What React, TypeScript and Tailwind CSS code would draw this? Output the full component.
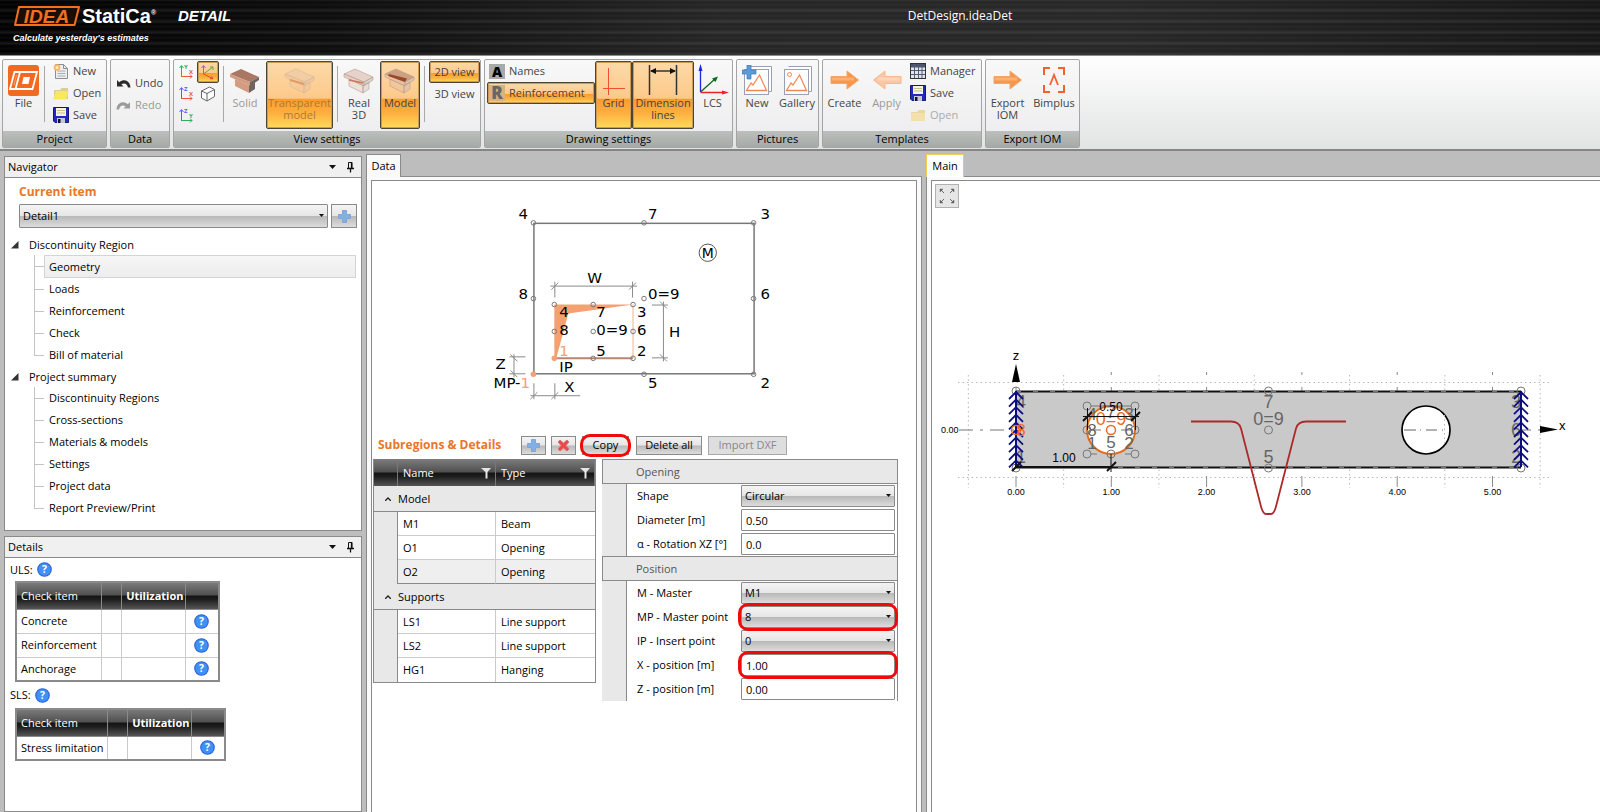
import type { ReactNode } from "react";

const uiFont = "font-['Open_Sans','Noto_Sans',sans-serif]";
const activeBtn =
  "rounded-[2px] border border-[#4a4538] shadow-[inset_0_0_0_1px_#c99b55] bg-[linear-gradient(#fcd9a8_0%,#fdc98a_55%,#fb9c2c_56%,#fdb040_78%,#ffdc5c_100%)]";
const greyBtn =
  "border border-[#8a8a8a] bg-[linear-gradient(#f4f4f4_0%,#e6e6e6_48%,#b9b9b9_52%,#dcdcdc_100%)]";
const headGrad = "bg-[linear-gradient(#7d7d7d_0%,#505050_48%,#141414_52%,#1e1e1e_65%,#555_100%)]";

/* ---------- icons ---------- */

function FileLogo() {
  return (
    <svg width="31" height="31" viewBox="0 0 31 31" aria-hidden="true">
      <rect width="31" height="31" rx="3" fill="#f26a21" />
      <g fill="none" stroke="#fff" strokeWidth="1.800">
        <path d="M6.500 7h22.500l-4.500 17H2z" />
        <path d="M12 7 7.500 24" />
        <path d="M8.500 10 6 20" strokeWidth="1" strokeOpacity=".35" />
      </g>
      <path d="M15.500 12h6.500l-1.500 7H14z" fill="#fff" />
    </svg>
  );
}

function NewDocIcon() {
  return (
    <svg width="16" height="16" viewBox="0 0 16 16" aria-hidden="true">
      <path d="M2.500 1.500h8l4 4v10h-12z" fill="#eceef0" stroke="#8b8f94" />
      <path d="M10.500 1.500v4h4" fill="none" stroke="#8b8f94" />
      <path d="M4.500 8h8M4.500 10.500h8M4.500 13h8" stroke="#a9adb2" />
      <circle cx="4" cy="4.500" r="3.300" fill="#f9b668" />
      <circle cx="4" cy="4.500" r="1.500" fill="#fff0b0" />
    </svg>
  );
}

function FolderIcon({ dim = false }: { dim?: boolean }) {
  return (
    <svg width="16" height="16" viewBox="0 0 16 16" aria-hidden="true">
      <path d="M1 5h6l1.500-2H15v11H1z" fill={dim ? "#ecd7a0" : "#d9cf93"} />
      <path d={dim ? "M1 6h14v8H1z" : "M3 6h13l-3 8.500H0z"} fill={dim ? "#f3e0ae" : "#f7e85c"} />
    </svg>
  );
}

function SaveIcon() {
  return (
    <svg width="16" height="16" viewBox="0 0 16 16" aria-hidden="true">
      <path d="M.5.500h15v15H2L.5 14z" fill="#2327c4" stroke="#15177a" />
      <rect x="3" y="1" width="10" height="8" fill="#f4f4e4" />
      <path d="M4 3.500h8M4 6h8" stroke="#c9c18c" />
      <rect x="4" y="11" width="8" height="5" fill="#c4c6dc" />
      <rect x="5" y="12" width="2.500" height="4" fill="#101040" />
    </svg>
  );
}

function UndoIcon({ redo = false }: { redo?: boolean }) {
  return (
    <svg width="15" height="12" viewBox="0 0 15 12" aria-hidden="true">
      <path
        d={
          redo
            ? "M14 9.500H7.500l2.200-2.200C6.500 5.500 4 6.500 3 10.500H.5C1 4.500 6 1 11.800 5.200L14 3z"
            : "M1 9.500h6.500L5.300 7.300C8.500 5.500 11 6.500 12 10.500h2.500C14 4.500 9 1 3.200 5.200L1 3z"
        }
        fill={redo ? "#9b9b9b" : "#2b2b2b"}
      />
    </svg>
  );
}

function AxisIcon({ up, upColor, side, sideColor }: { up: string; upColor: string; side: string; sideColor: string }) {
  return (
    <svg width="16" height="17" viewBox="0 0 16 17" aria-hidden="true">
      <path d="M3.500 14V3M1.500 5l2-2.500 2 2.500" fill="none" stroke={upColor} />
      <path d="M3.500 13.500H14M12 11.500l2 2-2 2" fill="none" stroke={sideColor} />
      <text x="6" y="6" fontSize="6" fontWeight="700" fill={upColor}>
        {up}
      </text>
      <text x="11" y="11" fontSize="6" fontWeight="700" fill={sideColor}>
        {side}
      </text>
    </svg>
  );
}

function Axis3dIcon() {
  return (
    <svg width="16" height="16" viewBox="0 0 16 16" fill="none" aria-hidden="true">
      <path d="M3.500 10V1.500M1.500 4l2-2.500 2 2.500" stroke="#a06ab8" />
      <path d="M3.500 10 13 3M10 3h3v3" stroke="#6fa545" />
      <path d="M3.500 10l9 4.500M10 14.700l3 0-1.500-2.500" stroke="#f0442e" />
    </svg>
  );
}

function CubeIcon() {
  return (
    <svg width="16" height="16" viewBox="0 0 16 16" fill="none" stroke="#666" aria-hidden="true">
      <path d="M1.500 5 9.500 1l5 2.500v7l-7.500 4.500-5.500-3z" fill="#fff" />
      <path d="M1.500 5 7 7.500l7.500-4M7 7.500V15" />
    </svg>
  );
}

type BeamKind = "solid" | "ghost" | "real" | "model";

function BeamIcon({ kind }: { kind: BeamKind }) {
  const solid = kind === "solid";
  const top = solid ? "#a97762" : kind === "model" ? "#b98a76" : "#dfc3b7";
  const front = solid ? "#d39b80" : "#e3b7a3";
  const side = solid ? "#70645f" : "#c9bab4";
  return (
    <svg width="32" height="27" viewBox="0 0 32 27" aria-hidden="true" opacity={kind === "ghost" ? 0.5 : 1}>
      <g stroke={solid ? "none" : "#b79d92"} strokeWidth=".6">
        <path d="M1 7 12 2l18 8-9 5z" fill={top} fillOpacity={solid ? 1 : 0.7} />
        <path d="M1 7l20 8v4L1 10z" fill={front} fillOpacity={solid ? 1 : 0.6} />
        <path d="M21 15l9-5v3l-9 6z" fill={side} fillOpacity={solid ? 1 : 0.6} />
        <path d="M6 12l14 6.500V26L6 19z" fill={front} fillOpacity={solid ? 1 : 0.35} />
        <path d="M20 18.500l6-3.500v7l-6 4z" fill={side} fillOpacity={solid ? 1 : 0.4} />
      </g>
      {kind === "real" && <path d="M6 13l14 3" stroke="#cf7555" strokeWidth="1.500" />}
      {kind === "ghost" && <path d="M6 13l14 4" stroke="#c46a30" strokeWidth="2" />}
      {kind === "model" && <path d="M5 7l18 4.500-2 3.500L4 9z" fill="#9a4a2c" />}
    </svg>
  );
}

function GridIcon() {
  return (
    <svg width="22" height="32" viewBox="0 0 22 32" stroke="#f0502e" aria-hidden="true">
      <path d="M5.500 4v27M0 24.500h22" />
    </svg>
  );
}

function DimensionIcon() {
  return (
    <svg width="30" height="32" viewBox="0 0 30 32" aria-hidden="true">
      <path d="M1.500 1v30M28.500 1v30M3 7h24" stroke="#333" strokeWidth="1.500" />
      <path d="M2 7l6-3v6zM28 7l-6-3v6z" fill="#111" />
    </svg>
  );
}

function LcsIcon() {
  return (
    <svg width="32" height="32" viewBox="0 0 32 32" aria-hidden="true">
      <path d="M3.500 28V4" stroke="#22e" strokeWidth="1.300" />
      <path d="M3.500 0l2 7h-4z" fill="#22e" />
      <path d="M3.500 28 18 15" stroke="#0a6a1a" strokeWidth="1.300" />
      <path d="M21 12.500l-2.500 5.500-3.500-3.500z" fill="#0a6a1a" />
      <path d="M3.500 28.500H28" stroke="#e22" strokeWidth="1.300" />
      <path d="M32 28.500l-7-2v4z" fill="#e22" />
    </svg>
  );
}

function PictureIcon({ plus = false }: { plus?: boolean }) {
  return (
    <svg width="31" height="31" viewBox="0 0 31 31" aria-hidden="true">
      <path d="M6.500 1.500h23v25h-3" fill="#fff" stroke="#9aa0b4" />
      <rect x="2.500" y="4.500" width="24" height="25" fill="#fff" stroke="#9aa0b4" />
      <path d="M4.500 25.500 9 18l2 2 6.500-10 7 15.500z" fill="none" stroke="#f08a55" strokeWidth="1.300" />
      {plus ? (
        <path d="M5 0h4v5h5v4H9v5H5V9H0V5h5z" fill="#5c9bd8" stroke="#3b78b8" strokeWidth=".7" />
      ) : (
        <circle cx="7.500" cy="9.500" r="2" fill="none" stroke="#f08a55" />
      )}
    </svg>
  );
}

function ArrowIcon({ left = false }: { left?: boolean }) {
  return (
    <svg width="30" height="20" viewBox="0 0 30 20" aria-hidden="true">
      <path
        d={left ? "M29 6.500H13V1L1.500 10 13 19v-5.500h16z" : "M1 6.500h16V1l11.500 9L17 19v-5.500H1z"}
        fill={left ? "#fac7a4" : "#f9964a"}
        stroke={left ? "#f7b68c" : "#f0a66c"}
      />
      <path d={left ? "M28 9H6" : "M2 9h22"} stroke="#fff" strokeOpacity=".25" strokeWidth="3" />
    </svg>
  );
}

function ManagerIcon() {
  return (
    <svg width="16" height="16" viewBox="0 0 16 16" aria-hidden="true">
      <rect x=".5" y=".5" width="15" height="15" fill="#dfe6f2" stroke="#333" />
      <rect x="1" y="1" width="14" height="3" fill="#4a5370" />
      <path d="M4.500 1v14M8.500 1v14M12 1v14M1 7.500h14M1 11.500h14M1 4h14" stroke="#555c6e" />
    </svg>
  );
}

function BimplusIcon() {
  return (
    <svg width="24" height="28" viewBox="0 0 24 28" fill="none" stroke="#f2622c" strokeWidth="2" aria-hidden="true">
      <path d="M8 2H2v7M16 2h6v7M8 26H2v-7M16 26h6v-7" />
      <path d="M8 19l4-10 4 10" strokeWidth="1.800" />
    </svg>
  );
}

function PlusIcon() {
  return (
    <svg width="13" height="13" viewBox="0 0 13 13" aria-hidden="true">
      <path d="M4.500.5h4v4h4v4h-4v4h-4v-4h-4v-4h4z" fill="#7fb0e6" stroke="#86a4cf" />
    </svg>
  );
}

function CrossIcon() {
  return (
    <svg width="13" height="13" viewBox="0 0 13 13" aria-hidden="true">
      <path d="M1 3l2-2 3.500 3L10 1l2 2-3 3.500 3 3.500-2 2-3.500-3L3 12l-2-2 3-3.500z" fill="#ef4747" stroke="#d97676" />
    </svg>
  );
}

function HelpIcon() {
  return (
    <svg width="15" height="15" viewBox="0 0 16 16" aria-hidden="true">
      <circle cx="8" cy="8" r="7.200" fill="#3f92f5" stroke="#2c5fd8" strokeWidth="1.200" />
      <text x="8" y="12" textAnchor="middle" fontSize="11" fontWeight="700" fill="#fff">
        ?
      </text>
    </svg>
  );
}

function FilterIcon() {
  return (
    <svg width="10" height="12" viewBox="0 0 10 12" aria-hidden="true">
      <path d="M0 1h10L6.500 5v6.500h-2V5z" fill="#e6e6e6" />
    </svg>
  );
}

function PinIcon() {
  return (
    <svg width="9" height="12" viewBox="0 0 9 12" aria-hidden="true">
      <path d="M2.500 7V1.500h3.500V7" fill="none" stroke="#111" />
      <path d="M5.500 1v6M1 7.500h7M4.500 8v3.500" stroke="#111" strokeWidth="1.300" />
    </svg>
  );
}

/* ---------- ribbon ---------- */

function RibbonGroup({ title, className, children }: { title: string; className: string; children: ReactNode }) {
  return (
    <section
      className={`flex h-[89px] shrink-0 flex-col overflow-hidden rounded-[2px] border border-[#a4a4a4] bg-[linear-gradient(#f8f8f8,#ececee)] ${className}`}
    >
      <div className="flex flex-1 items-start">{children}</div>
      <h2 className="h-4 bg-[linear-gradient(#bcc0bd,#a6a9a7)] text-center text-[11px] leading-4 text-black">{title}</h2>
    </section>
  );
}

function Separator() {
  return <span className="mx-1 mt-1.5 h-14 w-px shrink-0 bg-[#a8a8a8]" />;
}

function BigButton({
  icon,
  label,
  className = "",
  active = false,
}: {
  icon: ReactNode;
  label: string;
  className?: string;
  active?: boolean;
}) {
  return (
    <button
      className={`mt-px flex h-[68px] shrink-0 flex-col items-center pt-px leading-3 ${active ? activeBtn : "border border-transparent"} ${className}`}
    >
      <span className="flex h-[34px] items-center">{icon}</span>
      <span className="whitespace-pre-line text-center">{label}</span>
    </button>
  );
}

function SmallButton({ icon, label, className = "" }: { icon: ReactNode; label: string; className?: string }) {
  return (
    <button className={`flex h-[22px] items-center gap-1 whitespace-nowrap ${className}`}>
      {icon}
      {label}
    </button>
  );
}

function Ribbon() {
  return (
    <div className="flex gap-[3px] overflow-hidden border-b-2 border-[#858585] bg-[linear-gradient(#fff,#e2e3e3)] px-0.5 pb-px pt-[3px] text-[11px] text-[#444]">
      <RibbonGroup title="Project" className="w-[105px]">
        <BigButton icon={<FileLogo />} label="File" className="w-[41px]" />
        <span className="mt-1.5 h-14 w-px bg-[#a8a8a8]" />
        <div className="ml-2">
          <SmallButton icon={<NewDocIcon />} label="New" />
          <SmallButton icon={<FolderIcon />} label="Open" />
          <SmallButton icon={<SaveIcon />} label="Save" />
        </div>
      </RibbonGroup>
      <RibbonGroup title="Data" className="w-[60px]">
        <div className="ml-[5px] mt-3">
          <SmallButton icon={<UndoIcon />} label="Undo" />
          <SmallButton icon={<UndoIcon redo />} label="Redo" className="text-[#999]" />
        </div>
      </RibbonGroup>
      <RibbonGroup title="View settings" className="w-[308px]">
        <div className="ml-1 flex flex-col">
          {[
            ["Y", "#2fae62", "X", "#f0553c"],
            ["Z", "#5c5cf0", "X", "#f0553c"],
            ["Z", "#5c5cf0", "Y", "#2fae62"],
          ].map(([up, upColor, side, sideColor]) => (
            <button key={up + side} className="flex h-[22px] items-center" aria-label={`View ${up}${side}`}>
              <AxisIcon up={up} upColor={upColor} side={side} sideColor={sideColor} />
            </button>
          ))}
        </div>
        <div className="ml-[3px] flex flex-col">
          <button className={`mt-px flex size-[22px] items-center justify-center ${activeBtn}`} aria-label="Axonometry">
            <Axis3dIcon />
          </button>
          <button className="flex size-[22px] items-center justify-center" aria-label="Perspective">
            <CubeIcon />
          </button>
        </div>
        <Separator />
        <BigButton icon={<BeamIcon kind="solid" />} label="Solid" className="w-[34px] text-[#999]" />
        <BigButton
          icon={<BeamIcon kind="ghost" />}
          label={"Transparent\nmodel"}
          className="ml-1 w-[67px] text-[#ab7a34]"
          active
        />
        <Separator />
        <BigButton icon={<BeamIcon kind="real" />} label={"Real\n3D"} className="w-[34px]" />
        <BigButton icon={<BeamIcon kind="model" />} label="Model" className="ml-1 w-10" active />
        <Separator />
        <div className="flex flex-col">
          <button className={`mt-px h-[22px] w-[51px] whitespace-nowrap ${activeBtn}`}>2D view</button>
          <button className="h-[22px] w-[51px] whitespace-nowrap">3D view</button>
        </div>
      </RibbonGroup>
      <RibbonGroup title="Drawing settings" className="w-[249px]">
        <div className="ml-0.5 flex flex-col">
          <SmallButton
            icon={<span className="w-4 bg-[#a9a9a9] text-center text-[14px] font-extrabold leading-[15px] text-black">A</span>}
            label="Names"
            className="pl-0.5"
          />
          <SmallButton
            icon={<span className="w-4 bg-[#d8b27c] text-center text-[17px] font-extrabold leading-4 text-[#666]">R</span>}
            label="Reinforcement"
            className={`w-[108px] pl-px ${activeBtn}`}
          />
        </div>
        <BigButton icon={<GridIcon />} label="Grid" className="w-[37px]" active />
        <BigButton icon={<DimensionIcon />} label={"Dimension\nlines"} className="w-[62px]" active />
        <BigButton icon={<LcsIcon />} label="LCS" className="w-[37px]" />
      </RibbonGroup>
      <RibbonGroup title="Pictures" className="w-[83px]">
        <BigButton icon={<PictureIcon plus />} label="New" className="w-10" />
        <BigButton icon={<PictureIcon />} label="Gallery" className="w-10" />
      </RibbonGroup>
      <RibbonGroup title="Templates" className="w-[160px]">
        <BigButton icon={<ArrowIcon />} label="Create" className="w-[43px]" />
        <BigButton icon={<ArrowIcon left />} label="Apply" className="w-[41px] text-[#999]" />
        <div className="ml-[3px]">
          <SmallButton icon={<ManagerIcon />} label="Manager" />
          <SmallButton icon={<SaveIcon />} label="Save" />
          <SmallButton icon={<FolderIcon dim />} label="Open" className="text-[#aaa]" />
        </div>
      </RibbonGroup>
      <RibbonGroup title="Export IOM" className="w-[95px]">
        <BigButton icon={<ArrowIcon />} label={"Export\nIOM"} className="w-[43px]" />
        <BigButton icon={<BimplusIcon />} label="Bimplus" className="w-[50px]" />
      </RibbonGroup>
    </div>
  );
}

function TitleBar() {
  return (
    <header className="relative h-14 border-b border-[#8c8c8c] bg-[#0b0b0b] bg-[repeating-linear-gradient(180deg,rgba(255,255,255,0.08)_0px,rgba(0,0,0,0)_2px,rgba(255,255,255,0.04)_5px,rgba(0,0,0,0)_7px,rgba(255,255,255,0.10)_11px),linear-gradient(90deg,#000_0%,#0b0b0b_20%,#242424_45%,#262626_70%,#151515_100%)] text-white">
      <div className="flex items-start gap-0.5 pl-3.5 pt-1.5">
        <svg width="66" height="20" viewBox="0 0 66 20" role="img" aria-label="IDEA">
          <path d="M5 1h60l-4.500 18H1z" fill="#1a0d04" stroke="#f26f1d" strokeWidth="2" strokeLinejoin="round" />
          <text
            x="32.500"
            y="16.500"
            textAnchor="middle"
            fontSize="19"
            fontWeight="700"
            fontStyle="italic"
            fontFamily="Liberation Sans, sans-serif"
            fill="#f26f1d"
          >
            IDEA
          </text>
        </svg>
        <span className="w-[78px] font-['Liberation_Sans',sans-serif] text-[20px] font-bold leading-5">
          StatiCa<sup className="-top-2 text-[7px]">®</sup>
        </span>
        <span className="pl-4 font-['Liberation_Sans',sans-serif] text-[15px] font-bold italic leading-5">DETAIL</span>
      </div>
      <p className="pl-[13px] pt-1 font-['Liberation_Sans',sans-serif] text-[9px] font-bold italic leading-4">
        Calculate yesterday's estimates
      </p>
      <h1 className="absolute left-1/5 right-0 top-2 text-center text-[12px] leading-4">DetDesign.ideaDet</h1>
    </header>
  );
}

/* ---------- left column ---------- */

function Panel({ title, className = "", children }: { title: string; className?: string; children: ReactNode }) {
  return (
    <section className={`border border-[#8a8a8a] bg-white ${className}`}>
      <div className="flex h-[21px] items-center border-b border-[#8a8a8a] bg-[#f0f0f0] pl-[3px] pr-1.5">
        <h2 className="flex-1">{title}</h2>
        <button className="mr-2.5" aria-label={`${title} menu`}>
          <svg width="7" height="4" viewBox="0 0 7 4" aria-hidden="true">
            <path d="M0 0h7L3.500 4z" fill="#111" />
          </svg>
        </button>
        <button aria-label={`Pin ${title}`}>
          <PinIcon />
        </button>
      </div>
      {children}
    </section>
  );
}

function Select({ id, value, label, className = "" }: { id: string; value: string; label?: string; className?: string }) {
  return (
    <span className={`relative block ${className}`}>
      <select
        id={id}
        aria-label={label}
        defaultValue={value}
        className={`block h-full w-full appearance-none rounded-[1px] pl-[3px] leading-4 ${greyBtn}`}
      >
        <option>{value}</option>
      </select>
      <svg className="pointer-events-none absolute right-1 top-1/2 -mt-0.5" width="5" height="3" viewBox="0 0 5 3" aria-hidden="true">
        <path d="M0 0h5L2.500 3z" fill="#111" />
      </svg>
    </span>
  );
}

const tree = [
  { title: "Discontinuity Region", items: ["Geometry", "Loads", "Reinforcement", "Check", "Bill of material"] },
  {
    title: "Project summary",
    items: ["Discontinuity Regions", "Cross-sections", "Materials & models", "Settings", "Project data", "Report Preview/Print"],
  },
];

function TreeGroup({ title, items }: { title: string; items: string[] }) {
  return (
    <li>
      <div className="flex h-[21px] items-center gap-2.5 pl-1.5">
        <svg width="8" height="8" viewBox="0 0 8 8" aria-hidden="true">
          <path d="M7.500 0v7.500H0z" fill="#333" />
        </svg>
        {title}
      </div>
      <ul className="pl-[29px] pr-[5px]">
        {items.map((item, i) => (
          <li key={item} className="flex">
            <span className="flex w-2.5 flex-col">
              <span className="flex-1 border-b border-l border-[#c4c4c4]" />
              <span className={`flex-1 ${i < items.length - 1 ? "border-l border-[#c4c4c4]" : ""}`} />
            </span>
            <a
              href="#"
              className={`flex flex-1 items-center pl-1 ${
                item === "Geometry" ? "h-[23px] border border-[#d4d4d4] bg-[linear-gradient(#f6f6f7,#ededee)]" : "ml-px h-[22px]"
              }`}
            >
              {item}
            </a>
          </li>
        ))}
      </ul>
    </li>
  );
}

function CheckTable({ rows, firstCol }: { rows: string[]; firstCol: string }) {
  const th = "h-[27px] border border-[#8a8a8a] font-normal";
  const td = "h-[24px] border border-[#cbcbcb]";
  return (
    <table className="ml-2.5 border-collapse border-2 border-[#8a8a8a]">
      <thead>
        <tr className={`text-white ${headGrad}`}>
          <th className={`${th} pl-1 text-left ${firstCol}`}>Check item</th>
          <th className={`${th} w-5`} />
          <th className={`${th} w-16 pr-px text-right`}>
            <b>Utilization</b>
          </th>
          <th className={`${th} w-[34px]`} />
        </tr>
      </thead>
      <tbody>
        {rows.map((row) => (
          <tr key={row}>
            <td className={`${td} whitespace-nowrap pl-1`}>{row}</td>
            <td className={td} />
            <td className={td} />
            <td className={td}>
              <button className="mx-auto block" aria-label={`Help for ${row}`}>
                <HelpIcon />
              </button>
            </td>
          </tr>
        ))}
      </tbody>
    </table>
  );
}

function Sidebar() {
  return (
    <aside className="flex w-[358px] shrink-0 flex-col gap-[5px] pt-[5px]">
      <Panel title="Navigator" className="h-[375px]">
        <div className="px-[14px] pr-1 pt-1.5">
          <label htmlFor="current-item" className="block text-[12px] font-bold leading-4 text-[#e8762c]">
            Current item
          </label>
          <div className="mt-1 flex gap-[3px]">
            <Select id="current-item" value="Detail1" className="h-6 flex-1" />
            <button className={`flex h-6 w-[26px] items-center justify-center ${greyBtn}`} aria-label="Add item">
              <PlusIcon />
            </button>
          </div>
        </div>
        <ul className="mt-1.5">
          {tree.map((group) => (
            <TreeGroup key={group.title} title={group.title} items={group.items} />
          ))}
        </ul>
      </Panel>
      <Panel title="Details" className="flex-1">
        <h3 className="flex h-[23px] items-center gap-1 pl-[5px]">
          ULS: <HelpIcon />
        </h3>
        <CheckTable rows={["Concrete", "Reinforcement", "Anchorage"]} firstCol="w-[85px]" />
        <h3 className="flex h-[26px] items-center gap-1 pl-[5px]">
          SLS: <HelpIcon />
        </h3>
        <CheckTable rows={["Stress limitation"]} firstCol="w-[91px]" />
      </Panel>
    </aside>
  );
}

/* ---------- data column ---------- */

const schemeNodes = [
  [533, 222], [644, 222], [754, 222], [533, 298], [644, 298], [754, 298], [644, 374], [754, 374],
  [554, 304], [593, 304], [633, 304], [554, 331], [593, 331], [633, 331], [593, 358], [633, 358],
];

const schemeLabels: [number, number, string][] = [
  [518, 218, "4"], [648, 218, "7"], [761, 218, "3"], [518, 298, "8"], [648, 298, "0=9"], [761, 298, "6"],
  [648, 388, "5"], [761, 388, "2"], [587, 282, "W"], [669, 337, "H"], [495, 369, "Z"], [564, 392, "X"],
  [559, 317, "4"], [596, 317, "7"], [637, 317, "3"], [559, 335, "8"], [596, 335, "0=9"], [637, 335, "6"],
  [596, 356, "5"], [637, 356, "2"], [559, 372, "IP"],
];

function Scheme() {
  return (
    <svg className="block w-full" viewBox="371 180 546 251" fontFamily="DejaVu Sans, sans-serif" fontSize="15">
      <path d="M554 304h79l-65 9-12 45h-2z" fill="#f4a071" />
      <path d="M554 358h79" stroke="#b58672" strokeWidth="2" />
      <path d="M633 304v54" stroke="#f4b08c" />
      <rect x="533.500" y="222.500" width="221" height="151" fill="none" stroke="#777" strokeWidth="1.500" />
      <g fill="none" stroke="#8a8a8a">
        <path d="M554.500 281v16M632.500 281v16M550 285.500h87M551 289l7-7M629 289l7-7" />
        <path d="M652 304.500h16M652 357.500h16M663.500 301v60M660 301l7 7M660 354l7 7" />
        <path d="M509 356.500h16M509 373.500h16M513.500 354v23M510 354l7 7M510 370l7 7" />
        <path d="M533.500 383v16M554.500 383v16M530 395.500h50M530 399l7-7M551 399l7-7" />
      </g>
      {schemeNodes.map(([x, y]) => (
        <circle key={`${x}-${y}`} cx={x} cy={y} r="2.300" fill="none" stroke="#777" />
      ))}
      <circle cx="533" cy="374" r="2.800" fill="#f4a071" />
      <circle cx="554" cy="358" r="2.800" fill="#f4a071" />
      {schemeLabels.map(([x, y, text]) => (
        <text key={`${x}-${y}`} x={x} y={y}>
          {text}
        </text>
      ))}
      <text x="559" y="356" fill="#f4a071">
        1
      </text>
      <text x="493" y="388">
        MP-<tspan fill="#f4a071">1</tspan>
      </text>
      <circle cx="708" cy="252" r="8.700" fill="none" stroke="#555" />
      <text x="708" y="257" textAnchor="middle" fontSize="14">
        M
      </text>
    </svg>
  );
}

const regionGroups = [
  { title: "Model", rows: [["M1", "Beam"], ["O1", "Opening"], ["O2", "Opening"]] },
  { title: "Supports", rows: [["LS1", "Line support"], ["LS2", "Line support"], ["HG1", "Hanging"]] },
];

function RegionTable() {
  const th = "h-[27px] border-r border-[#777] p-0 font-normal";
  return (
    <table className="w-[223px] shrink-0 table-fixed border-separate border-spacing-0 border-x border-b border-[#8a8a8a]">
      <colgroup>
        <col className="w-6" />
        <col className="w-[98px]" />
        <col />
      </colgroup>
      <thead>
        <tr className={`text-left text-white ${headGrad}`}>
          <th className={th} />
          {["Name", "Type"].map((name) => (
            <th key={name} className={th}>
              <div className="flex items-center justify-between pl-[5px] pr-1">
                {name}
                <FilterIcon />
              </div>
            </th>
          ))}
        </tr>
      </thead>
      {regionGroups.map((group) => (
        <tbody key={group.title}>
          <tr className="bg-[#e8e8e8]">
            <th colSpan={3} className="h-[26px] border-b border-[#8a8a8a] p-0 text-left font-normal">
              <div className="flex items-center gap-[7px] pl-[11px]">
                <svg width="6" height="4" viewBox="0 0 6 4" fill="none" aria-hidden="true">
                  <path d="M0 4l3-3 3 3" stroke="#222" strokeWidth="1.300" />
                </svg>
                {group.title}
              </div>
            </th>
          </tr>
          {group.rows.map(([name, type], i) => {
            const last = i === group.rows.length - 1;
            const line = last ? "border-b-[#8a8a8a]" : "border-b-[#cbcbcb]";
            const bg = name === "O2" ? "bg-[#efefef]" : "bg-white";
            const edge = last && group.title === "Supports" ? "border-b-0" : "border-b";
            return (
              <tr key={name}>
                <td className="h-6 border-r border-[#8a8a8a] bg-[#e8e8e8] p-0" />
                <td className={`border-r border-r-[#cbcbcb] ${edge} ${line} ${bg} p-0 pl-[5px]`}>{name}</td>
                <td className={`${edge} ${line} ${bg} p-0 pl-[5px]`}>{type}</td>
              </tr>
            );
          })}
        </tbody>
      ))}
    </table>
  );
}

type Field = { id: string; label: string; value: string; select?: boolean; marked?: boolean };

const sections: { title: string; fields: Field[] }[] = [
  {
    title: "Opening",
    fields: [
      { id: "shape", label: "Shape", value: "Circular", select: true },
      { id: "diameter", label: "Diameter [m]", value: "0.50" },
      { id: "rotation", label: "α - Rotation XZ [°]", value: "0.0" },
    ],
  },
  {
    title: "Position",
    fields: [
      { id: "master", label: "M - Master", value: "M1", select: true },
      { id: "master-point", label: "MP - Master point", value: "8", select: true, marked: true },
      { id: "insert-point", label: "IP - Insert point", value: "0", select: true },
      { id: "x-position", label: "X - position [m]", value: "1.00", marked: true },
      { id: "z-position", label: "Z - position [m]", value: "0.00" },
    ],
  },
];

function Mark() {
  return <span className="pointer-events-none absolute -inset-[3px] z-10 rounded-[10px] border-[3px] border-[#f00a0a]" />;
}

function PropertyGrid() {
  return (
    <div className="w-[296px] shrink-0 border-r border-[#8a8a8a]">
      {sections.map((section) => (
        <section key={section.title}>
          <h3 className="flex h-[25px] items-center border border-r-0 border-[#8a8a8a] bg-[#e8e8e8] pl-[33px] text-[#555]">
            {section.title}
          </h3>
          <div className="border-l-[24px] border-[#e8e8e8]">
            {section.fields.map((field) => (
              <div key={field.id} className="flex h-6 items-center border-l border-[#8a8a8a] pl-2.5 pr-0.5">
                <label htmlFor={field.id} className="flex-1 whitespace-nowrap">
                  {field.label}
                </label>
                <div className="relative h-[22px] w-[154px]">
                  {field.select ? (
                    <Select id={field.id} value={field.value} className="h-full" />
                  ) : (
                    <input
                      id={field.id}
                      defaultValue={field.value}
                      className="block h-full w-full rounded-[1px] border border-[#8a8a8a] bg-white pl-1 leading-4"
                    />
                  )}
                  {field.marked && <Mark />}
                </div>
              </div>
            ))}
          </div>
        </section>
      ))}
    </div>
  );
}

function DataColumn() {
  return (
    <section className="flex w-[556px] shrink-0 flex-col pt-[3px]">
      <div className="flex">
        <button className="relative z-10 -mb-px h-[23px] w-[35px] border border-b-0 border-[#8a8a8a] bg-[#fafafa]">Data</button>
      </div>
      <div className="flex flex-1 flex-col border border-b-0 border-[#8a8a8a] bg-[#fafafa] px-1 pt-[3px]">
        <div className="flex-1 border border-b-0 border-[#8a8a8a] bg-white">
          <Scheme />
          <div className="flex items-center pb-1 pl-1.5 pt-1">
            <h2 className="w-[143px] whitespace-nowrap text-[12px] font-bold leading-5 text-[#e8762c]">Subregions & Details</h2>
            <button className={`flex h-[19px] w-[25px] items-center justify-center ${greyBtn}`} aria-label="Add subregion">
              <PlusIcon />
            </button>
            <button className={`ml-[5px] flex h-[19px] w-[25px] items-center justify-center ${greyBtn}`} aria-label="Delete subregion">
              <CrossIcon />
            </button>
            <button className={`relative ml-1.5 h-[19px] w-[47px] ${greyBtn}`}>
              Copy
              <Mark />
            </button>
            <button className={`ml-[7px] h-[19px] w-[66px] ${greyBtn}`}>Delete all</button>
            <button className="ml-1.5 h-[19px] w-[79px] border border-[#a8a8a8] bg-[#dedede] text-[#888]" disabled>
              Import DXF
            </button>
          </div>
          <div className="flex items-start gap-1.5 pl-px">
            <RegionTable />
            <PropertyGrid />
          </div>
        </div>
      </div>
    </section>
  );
}

/* ---------- main view ---------- */

const SCALE = 95.3;
const px = (m: number) => 1016 + m * SCALE;

function LineSupport({ x }: { x: number }) {
  return (
    <g fill="none" stroke="#0d0d80">
      <path d={`M${x} 391v76`} strokeWidth="2" />
      {Array.from({ length: 10 }).map((_, i) => (
        <path key={i} d={`M${x - 7} ${399 + i * 7.6}l7-7 7 7`} strokeWidth="1.8" />
      ))}
    </g>
  );
}

function Drawing() {
  return (
    <svg
      className="block w-full"
      viewBox="932 181 668 400"
      fontFamily="Liberation Sans, sans-serif"
      role="img"
      aria-label="Beam elevation"
    >
      <g stroke="#b9b9b9" strokeDasharray="1.500 3">
        <path d="M958 382.500h592M958 477.500h592" />
        {[-0.5, 0.5, 1.5, 2.5, 3.5, 4.5, 5.5].map((m) => (
          <path key={m} d={`M${px(m)} 375v113`} />
        ))}
      </g>
      {[0, 1, 2, 3, 4, 5].map((m) => (
        <g key={m}>
          <path d={`M${px(m)} 372v3M${px(m)} 387v4M${px(m)} 476v11`} stroke="#8a8a8a" />
          <text x={px(m)} y="495" fontSize="9" textAnchor="middle">
            {m.toFixed(2)}
          </text>
        </g>
      ))}
      <path d="M959 430h581" stroke="#777" strokeDasharray="14 7 3 7" />
      <rect x="1016" y="392" width="505" height="75.500" fill="#c9c9c9" />
      <path d="M1016 391.500h505M1016 467.500h505" stroke="#111" strokeWidth="2" />
      <path d="M1016 391.500h505M1016 467.500h505" stroke="#777" strokeDasharray="5 12" />
      <text x="941" y="433" fontSize="9">
        0.00
      </text>

      {/* axes */}
      <path d="M1016 364l4 18h-8z" />
      <text x="1016" y="360" fontSize="13" textAnchor="middle">
        z
      </text>
      <path d="M1558 429.500l-18-3.500v7z" />
      <text x="1559" y="430" fontSize="13">
        x
      </text>

      {/* nodes of the master beam */}
      <g fill="none" stroke="#777">
        <circle cx="1016" cy="391" r="4" />
        <circle cx="1016" cy="468" r="4" />
        <circle cx="1521" cy="391" r="4" />
        <circle cx="1521" cy="468" r="4" />
        <circle cx="1268.500" cy="391" r="4" />
        <circle cx="1268.500" cy="430" r="4" />
        <circle cx="1268.500" cy="468" r="4" />
      </g>
      <g fill="#666" fontSize="18" textAnchor="middle">
        <text x="1268.500" y="408">7</text>
        <text x="1268.500" y="425">0=9</text>
        <text x="1268.500" y="463">5</text>
        <text x="1021" y="408">4</text>
        <text x="1021" y="463">1</text>
        <text x="1516" y="408">3</text>
        <text x="1516" y="436">6</text>
        <text x="1516" y="463">2</text>
      </g>
      <LineSupport x={1016} />
      <LineSupport x={1521} />
      <circle cx="1016" cy="430" r="4.500" fill="none" stroke="#f26a21" strokeWidth="1.500" />
      <text x="1021" y="436" fontSize="17" textAnchor="middle" fill="#f26a21">
        8
      </text>

      {/* openings */}
      <circle cx="1111" cy="430" r="24" fill="#fff" stroke="#e07020" strokeWidth="2" />
      <g fill="none" stroke="#777">
        {[1087, 1135].map((x) => [406, 430, 454].map((y) => <circle key={`${x}-${y}`} cx={x} cy={y} r="4" />))}
        <path d="M1091 406h40M1091 454h6M1125 454h6M1091 430h10M1121 430h10" />
        <circle cx="1111" cy="454" r="4" />
      </g>
      <g fill="#666" fontSize="17" textAnchor="middle">
        <text x="1111" y="418">7</text>
        <text x="1111" y="448">5</text>
        <text x="1092" y="436">8</text>
        <text x="1092" y="420">4</text>
        <text x="1129" y="420">3</text>
        <text x="1129" y="436">6</text>
        <text x="1092" y="449">1</text>
        <text x="1129" y="449">2</text>
      </g>
      <text x="1111" y="425" fontSize="18" textAnchor="middle" fill="#f26a21">
        0=9
      </text>
      <circle cx="1111" cy="430" r="4.500" fill="#fff" stroke="#f26a21" strokeWidth="1.500" />
      <path d="M1083 416.500h56M1087.500 408v22M1135.500 408v22" stroke="#111" />
      <path d="M1083 421l9-9M1131 421l9-9" stroke="#111" strokeWidth="2" />
      <text x="1111" y="411" fontSize="12" textAnchor="middle">
        0.50
      </text>
      <path d="M1016 467h95" stroke="#111" strokeWidth="2" />
      <path d="M1111 454v18" stroke="#111" />
      <path d="M1107 471l9-9M1012 471l9-9" stroke="#111" strokeWidth="2" />
      <text x="1064" y="462" fontSize="12" textAnchor="middle">
        1.00
      </text>
      <circle cx="1426" cy="430" r="24" fill="#fff" stroke="#000" strokeWidth="1.700" />
      <path d="M1404 430h12M1420 430h1M1426 430h11M1442 430h1" stroke="#666" />
      <path d="M1444.500 415v30" stroke="#b9b9b9" strokeDasharray="1.500 3" />

      <path
        d="M1191 421.500h40q8 0 10 7l20 78q2 7.500 5 7.500h5q3 0 5-7.500l20-78q2-7 10-7h40"
        fill="none"
        stroke="#ab2a2a"
        strokeWidth="1.800"
      />
    </svg>
  );
}

function MainColumn() {
  return (
    <main className="flex min-w-0 flex-1 flex-col pt-[3px]">
      <div className="flex">
        <button className="relative z-10 -mb-px h-[23px] w-[38px] border-x border-t border-[#f2cb52] bg-white">Main</button>
      </div>
      <div className="flex flex-1 flex-col border-l border-t border-[#8a8a8a] bg-[#fafafa] pl-1 pt-[3px]">
        <div className="relative flex-1 border-l border-t border-[#8a8a8a] bg-white">
          <button
            className="absolute left-[3px] top-[3px] flex size-6 items-center justify-center border border-[#b0b0b0] bg-[#e6e6e6]"
            aria-label="Zoom all"
          >
            <svg width="16" height="16" viewBox="0 0 16 16" fill="#666" stroke="#666" aria-hidden="true">
              <path d="M1 1h3L1 4zM15 1h-3l3 3zM1 15h3l-3-3zM15 15h-3l3-3z" strokeWidth=".5" />
              <path d="M2 2l3 3M14 2l-3 3M2 14l3-3M14 14l-3-3" />
            </svg>
          </button>
          <Drawing />
        </div>
      </div>
    </main>
  );
}

export default function App() {
  return (
    <div className={`flex min-h-screen flex-col bg-[#bdbdbd] text-[11px] leading-4 text-black ${uiFont}`}>
      <TitleBar />
      <Ribbon />
      <div className="flex flex-1 pl-1">
        <Sidebar />
        <div className="w-1 shrink-0" />
        <DataColumn />
        <div className="w-1 shrink-0" />
        <MainColumn />
      </div>
    </div>
  );
}
